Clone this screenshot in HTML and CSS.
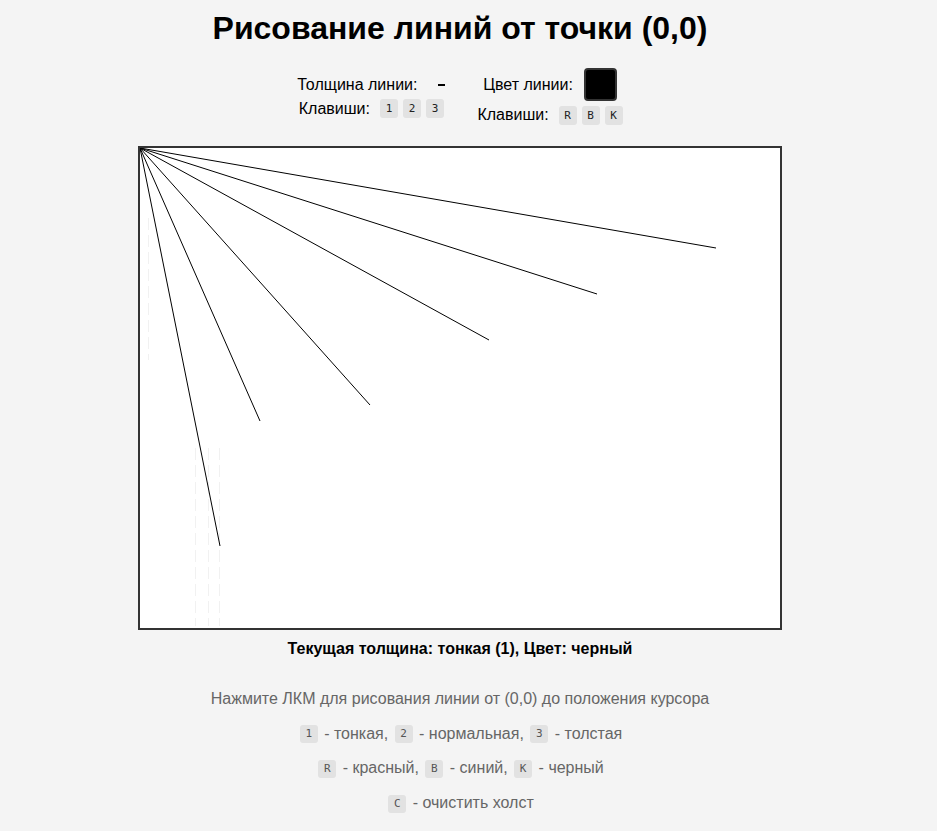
FILE: index.html
```html
<!DOCTYPE html>
<html lang="ru">
<head>
<meta charset="utf-8">
<title>Рисование линий</title>
<link rel="stylesheet" href="styles.css">
</head>
<body>
<div class="page">
  <h1 class="title">Рисование линий от точки (0,0)</h1>
  <div class="controls">
    <div class="group">
      <div class="row">
        <span class="label">Толщина линии:</span>
        <span class="preview"></span>
      </div>
      <div class="row keys-row">
        <span class="label">Клавиши:</span>
        <span class="key">1</span><span class="key">2</span><span class="key">3</span>
      </div>
    </div>
    <div class="group">
      <div class="row">
        <span class="label">Цвет линии:</span>
        <span class="swatch"></span>
      </div>
      <div class="row keys-row">
        <span class="label">Клавиши:</span>
        <span class="key">R</span><span class="key">B</span><span class="key">K</span>
      </div>
    </div>
  </div>
  <div class="canvas">
    <svg width="640" height="480" viewBox="0 0 640 480">
      <g stroke="#f1f1f1" stroke-width="1" stroke-dasharray="12 5" fill="none">
        <line x1="8.5" y1="70" x2="8.5" y2="212"/>
        <line x1="55.5" y1="300" x2="55.5" y2="478"/>
        <line x1="68.5" y1="300" x2="68.5" y2="478"/>
        <line x1="79.5" y1="300" x2="79.5" y2="478"/>
      </g>
      <g stroke="#000" stroke-width="1" fill="none">
        <line x1="0" y1="0" x2="576" y2="100"/>
        <line x1="0" y1="0" x2="457" y2="146"/>
        <line x1="0" y1="0" x2="349" y2="192"/>
        <line x1="0" y1="0" x2="230" y2="257"/>
        <line x1="0" y1="0" x2="120" y2="273"/>
        <line x1="0" y1="0" x2="80" y2="398"/>
      </g>
    </svg>
  </div>
  <div class="status">Текущая толщина: тонкая (1), Цвет: черный</div>
  <div class="help">
    <p>Нажмите ЛКМ для рисования линии от (0,0) до положения курсора</p>
    <p><span class="key">1</span> - тонкая, <span class="key">2</span> - нормальная, <span class="key">3</span> - толстая</p>
    <p><span class="key">R</span> - красный, <span class="key">B</span> - синий, <span class="key">K</span> - черный</p>
    <p><span class="key">C</span> - очистить холст</p>
  </div>
</div>
</body>
</html>
```
FILE: styles.css
```css
html, body {
  margin: 0;
  padding: 0;
  background: #f4f4f4;
}
body {
  font-family: "Liberation Sans", Arial, sans-serif;
  color: #000;
}
.page {
  width: 920px;
  display: flex;
  flex-direction: column;
  align-items: center;
  padding-top: 8px;
  padding-bottom: 40px;
}
.title {
  font-size: 32px;
  font-weight: bold;
  margin: 0 0 20px;
  line-height: 40px;
}
.controls {
  display: flex;
  align-items: center;
  gap: 32px;
  margin-bottom: 21px;
}
.group {
  display: flex;
  flex-direction: column;
  align-items: center;
  gap: 4px;
}
.row {
  display: flex;
  align-items: center;
}
.label {
  font-size: 16px;
  line-height: 20px;
}
.keys-row .label {
  margin-right: 5px;
}
.preview {
  display: inline-block;
  width: 7px;
  height: 2px;
  background: #000;
  margin-left: 21px;
}
.swatch {
  display: inline-block;
  width: 29px;
  height: 29px;
  background: #000;
  border: 2px solid #333;
  border-radius: 4px;
  margin-left: 11px;
}
.key {
  display: inline-flex;
  align-items: center;
  justify-content: center;
  min-width: 18px;
  height: 19px;
  box-sizing: border-box;
  padding: 0 5px;
  background: #e2e2e2;
  border-radius: 3px;
  font-family: "DejaVu Sans Mono", monospace;
  font-size: 11px;
  color: #222;
  margin-left: 5px;
  vertical-align: middle;
}
.keys-row .key:first-of-type {
  margin-left: 0;
}
.canvas {
  width: 640px;
  height: 480px;
  background: #fff;
  border: 2px solid #333;
}
.canvas svg {
  display: block;
}
.status {
  margin-top: 10px;
  font-size: 16px;
  font-weight: bold;
}
.help {
  margin-top: 31px;
  color: #666;
  font-size: 16px;
  text-align: center;
}
.help p {
  margin: 0 0 14.7px;
  line-height: 20px;
}
.help .key {
  margin: 0 2px;
  height: 18px;
  min-width: 18px;
  color: #555;
}
```
